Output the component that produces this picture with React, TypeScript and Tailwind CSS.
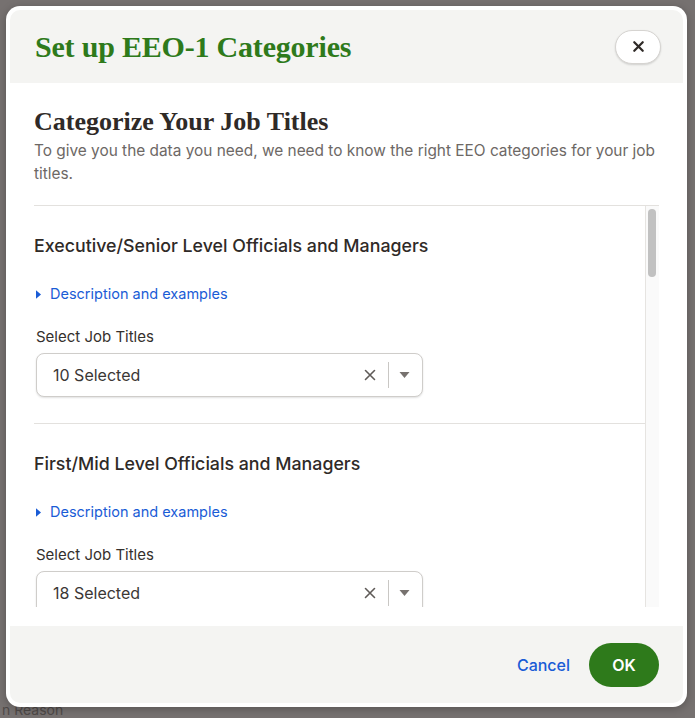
import React from "react";

const serif = { fontFamily: '"Liberation Serif", "DejaVu Serif", serif' };

type Category = { title: string; count: number };

const categories: Category[] = [
  { title: "Executive/Senior Level Officials and Managers", count: 10 },
  { title: "First/Mid Level Officials and Managers", count: 18 },
];

function CloseIcon({ className }: { className?: string }) {
  return (
    <svg viewBox="0 0 16 16" className={className} fill="none" stroke="currentColor" strokeLinecap="round">
      <path d="M3.5 3.5l9 9M12.5 3.5l-9 9" />
    </svg>
  );
}

function JobTitleSelect({ count }: { count: number }) {
  return (
    <div className="flex h-[44px] w-[387px] items-center rounded-[8px] border border-[#cfcdca] bg-white pl-[16px] pr-[10px] shadow-[0_1px_2px_rgba(0,0,0,0.12)]">
      <span className="flex-1 text-[16px] text-[#3b3735]">{count} Selected</span>
      <CloseIcon className="h-[16px] w-[16px] text-[#5f5b58] [stroke-width:1.6]" />
      <span className="mx-[10px] h-[26px] w-px bg-[#c9c7c4]" />
      <svg viewBox="0 0 10 6" className="mr-[2px] h-[6px] w-[11px] text-[#77726f]">
        <path d="M0 0h10L5 6z" fill="currentColor" />
      </svg>
    </div>
  );
}

function CategorySection({ cat, last }: { cat: Category; last?: boolean }) {
  return (
    <div className={`pt-[28px] pb-[26px] ${last ? "" : "border-b border-[#e3e1de]"}`}>
      <h3 className="text-[17.8px] leading-[24px] font-medium text-[#2f2a27]">{cat.title}</h3>
      <button className="mt-[26px] flex items-center gap-[9px] pl-[2px] text-[14.5px] leading-[20px] text-[#1a5cd6]">
        <svg viewBox="0 0 6 10" className="h-[9px] w-[5px]">
          <path d="M0 0l6 5-6 5z" fill="currentColor" />
        </svg>
        Description and examples
      </button>
      <div className="mt-[23px] pl-[2px]">
        <div className="text-[15px] leading-[20px] text-[#35302d]">Select Job Titles</div>
        <div className="mt-[6px]">
          <JobTitleSelect count={cat.count} />
        </div>
      </div>
    </div>
  );
}

export default function App() {
  return (
    <div
      className="relative h-[718px] w-[695px] overflow-hidden bg-[#767170] pt-[6px] pl-[6px]"
      style={{ fontFamily: 'Inter, "Liberation Sans", sans-serif' }}
    >
      {/* page content peeking out under the backdrop */}
      <span className="absolute bottom-0 left-[2px] text-[14px] leading-[16px] text-[#4f4a48]">n Reason</span>

      <div className="relative flex h-[701px] w-[681px] flex-col rounded-[14px] bg-white p-[4px] shadow-[0_2px_8px_rgba(0,0,0,0.25)]">
        {/* header */}
        <div className="flex h-[73px] shrink-0 items-center justify-between rounded-t-[10px] bg-[#f4f4f2] pl-[25px] pr-[22px]">
          <h1 className="text-[30px] font-bold tracking-[-0.2px] text-[#2e7a1b]" style={serif}>
            Set up EEO-1 Categories
          </h1>
          <button className="flex h-[34px] w-[46px] items-center justify-center rounded-full border border-[#d6d4d1] bg-white shadow-[0_1px_2px_rgba(0,0,0,0.15)]">
            <CloseIcon className="h-[15px] w-[15px] text-[#2f2a27] [stroke-width:2.4]" />
          </button>
        </div>

        {/* body */}
        <div className="flex min-h-0 flex-1 flex-col bg-white px-[24px] pt-[24px] pb-[19px]">
          <h2 className="text-[26px] leading-[30px] font-bold text-[#2f2a27]" style={serif}>
            Categorize Your Job Titles
          </h2>
          <p className="mt-[2px] text-[15.4px] leading-[23px] text-[#6d6865]">
            To give you the data you need, we need to know the right EEO categories for your job titles.
          </p>

          <div className="mt-[20px] flex min-h-0 flex-1 border-t border-[#e3e1de]">
            <div className="min-w-0 flex-1 overflow-hidden">
              {categories.map((c, i) => (
                <CategorySection key={c.title} cat={c} last={i === categories.length - 1} />
              ))}
            </div>
            {/* scrollbar */}
            <div className="w-[14px] shrink-0 border-l border-[#e6e4e1] bg-[#fafafa] pt-[3px] pl-[2px]">
              <div className="h-[68px] w-[8px] rounded-full bg-[#c1c1c1]" />
            </div>
          </div>
        </div>

        {/* footer */}
        <div className="flex h-[77px] shrink-0 items-center justify-end gap-[19px] rounded-b-[10px] bg-[#f4f4f2] pr-[24px]">
          <button className="text-[16px] font-medium text-[#1a5cd6]">Cancel</button>
          <button className="h-[44px] w-[70px] rounded-full bg-[#2e7a1b] text-[16px] font-semibold text-white">
            OK
          </button>
        </div>
      </div>
    </div>
  );
}
